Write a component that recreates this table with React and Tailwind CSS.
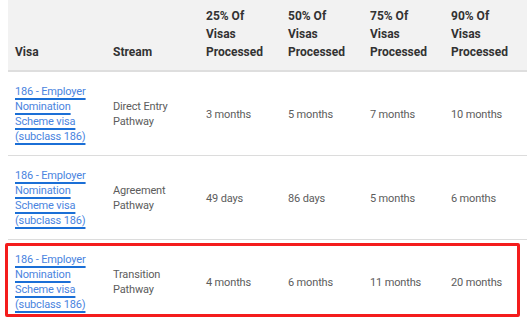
import React from 'react';

const headers = ['Visa', 'Stream', '25% Of Visas Processed', '50% Of Visas Processed', '75% Of Visas Processed', '90% Of Visas Processed'];

const rows = [
  { stream: ['Direct Entry', 'Pathway'], values: ['3 months', '5 months', '7 months', '10 months'] },
  { stream: ['Agreement', 'Pathway'], values: ['49 days', '86 days', '5 months', '6 months'] },
  { stream: ['Transition', 'Pathway'], values: ['4 months', '6 months', '11 months', '20 months'], marked: true },
];

const grid = 'grid grid-cols-[98px_93px_82px_82px_81px_1fr]';

const VisaLink = () => (
  <a
    href="#"
    className="text-[#4a84e0] underline decoration-[#1b6fd6] decoration-[1.5px] underline-offset-[3px]"
  >
    186 - Employer<br />Nomination<br />Scheme visa<br />(subclass 186)
  </a>
);

const App = () => {
  return (
    <div className="w-[527px] h-[323px] overflow-hidden bg-white font-['Roboto',sans-serif]">
      <div className="ml-2">
        <div className={`${grid} h-[72px] bg-[#f2f2f2] border-b-2 border-[#dedede] items-end pb-[9px]`}>
          {headers.map((h) => (
            <div key={h} className="px-[7px] text-[12px] leading-[18px] font-bold text-[#333] pr-4">
              {h.includes('Of') ? (
                <>
                  {h.split(' ').slice(0, 2).join(' ')}<br />Visas<br />Processed
                </>
              ) : h}
            </div>
          ))}
        </div>

        {rows.map((row, i) => (
          <div key={i} className="relative">
            {row.marked && (
              <div className="absolute left-[-3px] right-[7px] top-[3px] h-[74px] border-[3px] border-[#f41c1c] rounded-[2px] pointer-events-none" />
            )}
            <div className={`${grid} items-center pt-[12px] pb-[11px] text-[11px] leading-[15px] tracking-[-0.15px] text-[#5c5c5c] ${i < rows.length - 1 ? 'border-b border-[#dcdcdc]' : ''}`}>
              <div className="px-[7px]">
                <VisaLink />
              </div>
              <div className="px-[7px]">
                {row.stream[0]}<br />{row.stream[1]}
              </div>
              {row.values.map((v) => (
                <div key={v} className="px-[7px]">{v}</div>
              ))}
            </div>
          </div>
        ))}
      </div>
    </div>
  );
};

export default App;
